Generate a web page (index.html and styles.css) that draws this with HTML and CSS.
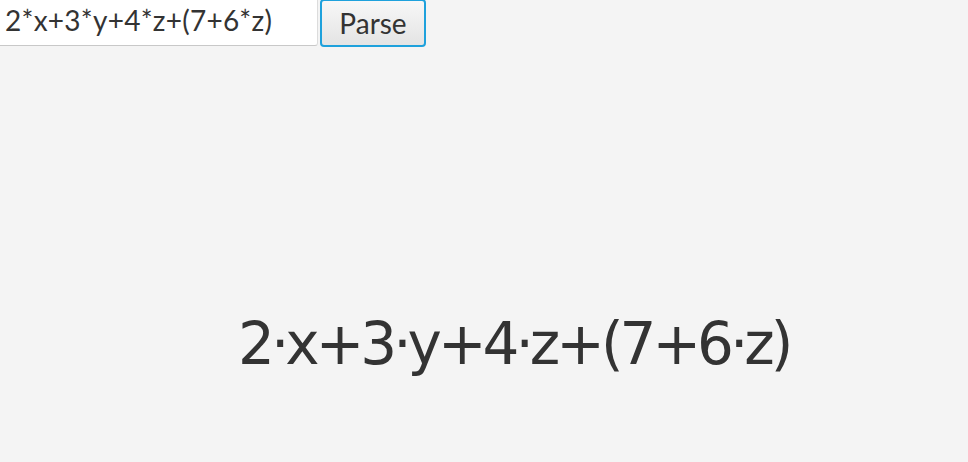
FILE: index.html
```html
<!DOCTYPE html>
<html>
<head>
<meta charset="utf-8">
<link rel="stylesheet" href="styles.css">
</head>
<body>
<div class="toolbar">
  <div class="field">2*x+3*y+4*z+(7+6*z)</div>
  <button class="btn">Parse</button>
</div>
<div class="canvas">
  <div class="formula">2·x+3·y+4·z+(7+6·z)</div>
</div>
</body>
</html>
```
FILE: styles.css
```css
html, body {
  margin: 0;
  padding: 0;
  background: #f4f4f4;
  width: 968px;
  height: 462px;
  overflow: hidden;
}
.toolbar {
  display: flex;
  align-items: flex-start;
  gap: 2px;
  font-family: "Lato", "Open Sans", sans-serif;
  color: #333;
}
.field {
  box-sizing: border-box;
  width: 318px;
  height: 46px;
  background: #fff;
  border-bottom: 1px solid #c8c8c8;
  border-right: 1px solid #dcdcdc;
  border-radius: 0 0 3px 0;
  padding: 2px 0 0 5px;
  font-size: 28px;
  letter-spacing: 0.25px;
  line-height: 36px;
}
.btn {
  box-sizing: border-box;
  width: 106px;
  height: 48px;
  margin-top: -1px;
  border: 2px solid #1ea1dc;
  border-radius: 4px;
  background: linear-gradient(#f7f7f7, #e4e4e4);
  font-family: "Lato", "Open Sans", sans-serif;
  font-size: 28px;
  color: #333;
  padding: 0;
  line-height: 36px;
}
.canvas {
  display: flex;
  justify-content: flex-start;
  padding: 262px 0 0 238px;
}
.formula {
  font-family: "DejaVu Sans", sans-serif;
  font-size: 58px;
  letter-spacing: -4px;
  color: #333;
  line-height: 70px;
}
```
